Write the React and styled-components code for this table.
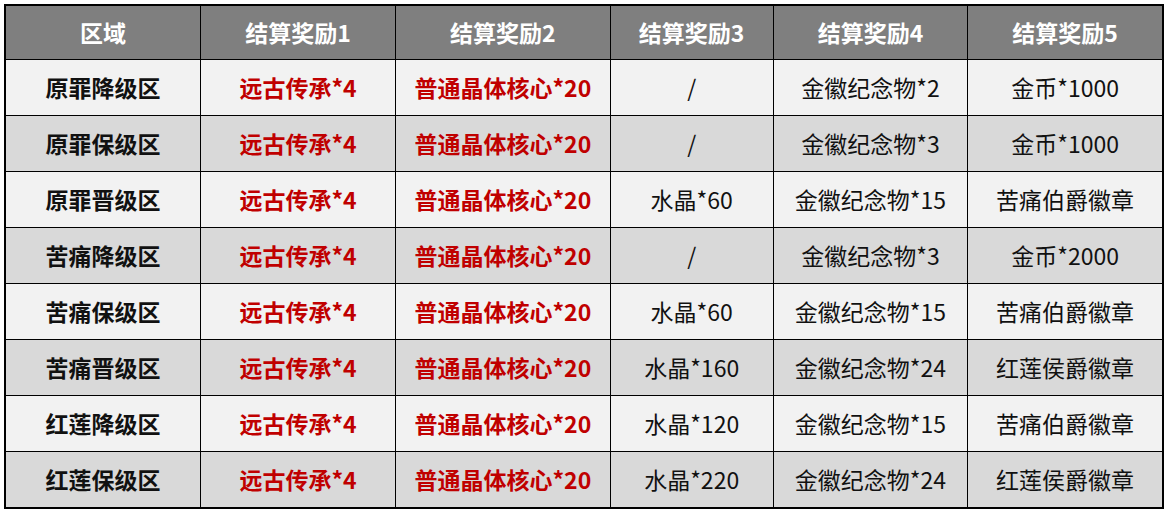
import styled, { createGlobalStyle } from "styled-components";

const GlobalStyle = createGlobalStyle`
  html, body {
    margin: 0;
    padding: 0;
    background: #ffffff;
  }
  body {
    font-family: "Noto Sans CJK SC", "Noto Sans", sans-serif;
  }
`;

const Page = styled.div`
  padding: 4px 0 0 4px;
`;

const Table = styled.table`
  border-collapse: collapse;
  border: 2px solid #000;
  table-layout: fixed;
  width: 1160px;
`;

const HeadCell = styled.th`
  height: 53px;
  padding: 0;
  background: #7f7f7f;
  color: #ffffff;
  font-size: 23px;
  font-weight: 700;
  text-align: center;
  border: 1px solid #000;
  line-height: 1;
`;

const Row = styled.tr`
  background: ${({ alt }) => (alt ? "#d9d9d9" : "#f2f2f2")};
`;

const Cell = styled.td`
  height: 55px;
  padding: 0;
  text-align: center;
  border: 1px solid #000;
  font-size: 23px;
  line-height: 1;
  font-weight: ${({ kind }) => (kind === "plain" ? 400 : 700)};
  color: ${({ kind }) => (kind === "red" ? "#c00000" : "#111111")};
`;

const widths = [195, 195, 214, 163, 194, 195];
const headers = ["区域", "结算奖励1", "结算奖励2", "结算奖励3", "结算奖励4", "结算奖励5"];

const rows = [
  ["原罪降级区", "/", "金徽纪念物*2", "金币*1000"],
  ["原罪保级区", "/", "金徽纪念物*3", "金币*1000"],
  ["原罪晋级区", "水晶*60", "金徽纪念物*15", "苦痛伯爵徽章"],
  ["苦痛降级区", "/", "金徽纪念物*3", "金币*2000"],
  ["苦痛保级区", "水晶*60", "金徽纪念物*15", "苦痛伯爵徽章"],
  ["苦痛晋级区", "水晶*160", "金徽纪念物*24", "红莲侯爵徽章"],
  ["红莲降级区", "水晶*120", "金徽纪念物*15", "苦痛伯爵徽章"],
  ["红莲保级区", "水晶*220", "金徽纪念物*24", "红莲侯爵徽章"],
];

export default function App() {
  return (
    <Page>
      <GlobalStyle />
      <Table>
        <colgroup>
          {widths.map((w, i) => (
            <col key={i} style={{ width: w }} />
          ))}
        </colgroup>
        <thead>
          <tr>
            {headers.map((h) => (
              <HeadCell key={h}>{h}</HeadCell>
            ))}
          </tr>
        </thead>
        <tbody>
          {rows.map((r, i) => (
            <Row key={r[0]} alt={i % 2 === 1}>
              <Cell kind="bold">{r[0]}</Cell>
              <Cell kind="red">远古传承*4</Cell>
              <Cell kind="red">普通晶体核心*20</Cell>
              <Cell kind="plain">{r[1]}</Cell>
              <Cell kind="plain">{r[2]}</Cell>
              <Cell kind="plain">{r[3]}</Cell>
            </Row>
          ))}
        </tbody>
      </Table>
    </Page>
  );
}
